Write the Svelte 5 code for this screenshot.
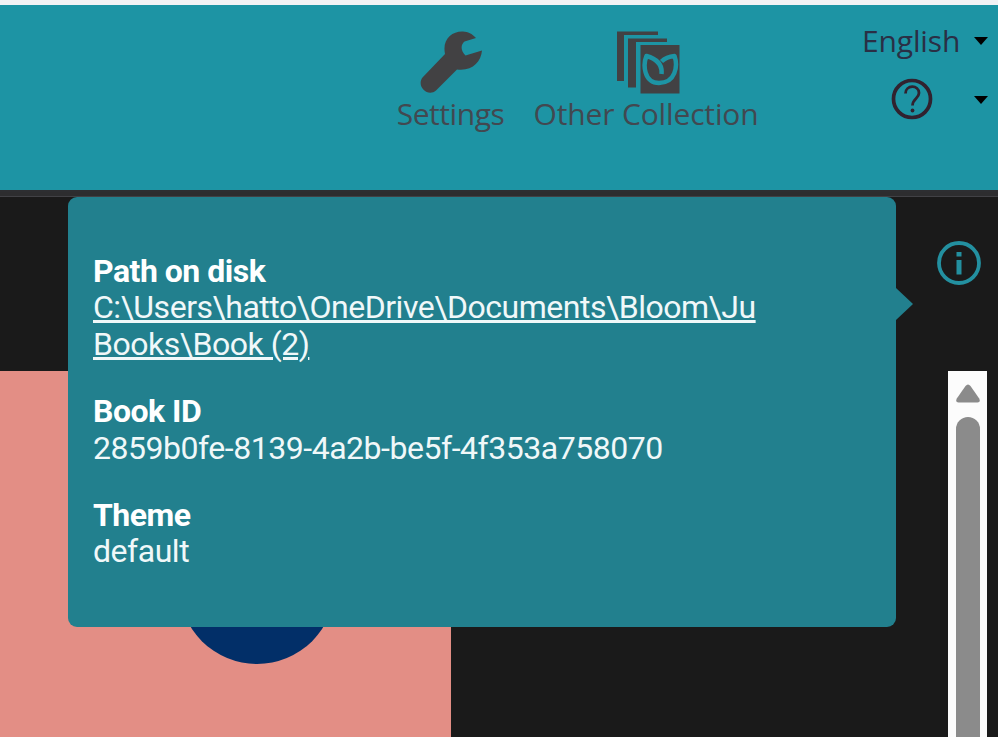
<script>
  const details = [
    { label: 'Path on disk', lines: ['C:\\Users\\hatto\\OneDrive\\Documents\\Bloom\\Ju', 'Books\\Book (2)'], link: true },
    { label: 'Book ID', lines: ['2859b0fe-8139-4a2b-be5f-4f353a758070'] },
    { label: 'Theme', lines: ['default'] }
  ];
</script>

<div class="window">
  <header>
    <nav>
      <button class="tool settings">
        <svg width="64" height="66" viewBox="0 0 64 66" fill="#424143">
          <path d="M3.500 47.500L26 24C23 9 33 1 44 1.500C49 1.800 53 3.500 57 8L45.500 11.500C41.500 14.500 41.500 21 46.500 25.500L63 20.500C62 32 53 41.500 38 39.500L17 60.500C9 67.500-3 56.500 3.500 47.500Z" />
        </svg>
        <span>Settings</span>
      </button>
      <button class="tool other">
        <svg width="64" height="66" viewBox="0 0 64 66">
          <path d="M1 1.500H42V5H8V51H1Z M12 8.500H51V12H20V57.500H12Z M24.500 15H63.500V63.500H24.500Z" fill="#424143" />
          <path d="M45.500 44C46.500 35 41 29 30.500 26C27 34 27.500 53 43 53C59.500 53 62 36 58.500 26C52.500 26.500 48.500 28.500 45.500 31.500" fill="none" stroke="#1d94a4" stroke-width="4.500" stroke-linejoin="round" />
        </svg>
        <span>Other Collection</span>
      </button>
    </nav>
    <div class="side">
      <div class="row language"><span>English</span><i class="caret"></i></div>
      <div class="row help">
        <svg width="42" height="42" viewBox="0 0 42 42" fill="none" stroke="#31222f">
          <circle cx="21" cy="21" r="18.500" stroke-width="3.700" />
          <path d="M14.500 15.500C14.500 6.500 28 6.500 28 15C28 20.500 21.500 20.500 21.500 27.500" stroke-width="2.800" />
          <circle cx="21.500" cy="32.500" r="1.900" fill="#31222f" stroke="none" />
        </svg>
        <i class="caret"></i>
      </div>
    </div>
  </header>
  <main>
    <div class="cover"><div class="dot"></div></div>
    <aside>
      <svg class="info" width="46" height="46" viewBox="0 0 46 46">
        <circle cx="23" cy="23" r="20" fill="none" stroke="#2390a0" stroke-width="3.800" />
        <path d="M20.500 12H25.500V16.500H20.500Z M20.500 20H25.500V34.500H20.500Z" fill="#2390a0" />
      </svg>
      <div class="scrollbar">
        <svg width="24" height="19" viewBox="0 0 24 19" fill="#8b8b8b"><path d="M9.500 2Q12 -1 14.500 2L23.200 14.500Q25 18.500 21.500 18.500H2.500Q-1 18.500 .8 14.500Z" /></svg>
        <div class="thumb"></div>
      </div>
    </aside>
    <section class="popup">
      {#each details as item}
        <dl>
          <dt>{item.label}</dt>
          {#each item.lines as line}
            <dd><span class:link={item.link}>{line}</span></dd>
          {/each}
        </dl>
      {/each}
    </section>
  </main>
</div>

<style>
  .window { width: 998px; height: 737px; overflow: hidden; display: flex; flex-direction: column; background: #1a1a1a; }
  header { box-sizing: border-box; flex: 0 0 192px; height: 192px; display: flex; justify-content: space-between; background: #1d94a4; border-top: 5px solid #f2f2f4; border-bottom: 2px solid #2d2e31; font: 30px/36px "Open Sans", "Noto Sans", sans-serif; letter-spacing: -0.15px; }
  nav { display: flex; margin-left: 397px; gap: 30px; padding-top: 25px; }
  .tool { width: 107px; padding: 0; border: 0; background: none; display: flex; flex-direction: column; align-items: center; font: inherit; letter-spacing: inherit; color: #424850; white-space: nowrap; }
  .tool svg { flex: none; }
  .settings { letter-spacing: -0.45px; }
  .other { width: 224px; }
  .other svg { margin-left: 3px; }
  .side { width: 136px; display: flex; flex-direction: column; padding-top: 18px; color: #2a2f45; }
  .row { display: flex; align-items: center; justify-content: space-between; box-sizing: border-box; width: 126px; }
  .help { margin-top: 19px; padding-left: 29px; }
  .caret { width: 14px; height: 8px; background: #000; clip-path: polygon(0 0, 100% 0, 50% 100%); }
  .help .caret { margin-top: 2px; }
  main { position: relative; flex: 1; display: flex; justify-content: space-between; align-items: flex-end; border-top: 4px solid #2d2d2f; box-shadow: inset 0 1px #414145; }
  .cover { width: 451px; height: 366px; background: #e38e85; overflow: hidden; }
  .dot { width: 156px; height: 156px; margin: 137px 0 0 179px; border-radius: 50%; background: #022f68; }
  aside { width: 61px; height: 497px; display: flex; flex-direction: column; justify-content: space-between; padding-right: 1px; }
  .info { flex: none; }
  .scrollbar { margin-left: 12px; width: 39px; height: 366px; background: #fcfcfc; display: flex; flex-direction: column; align-items: center; gap: 14px; padding-top: 13px; box-sizing: border-box; overflow: hidden; }
  .scrollbar svg { flex: none; }
  .thumb { width: 24px; height: 340px; flex: none; border-radius: 12px; background: #8b8b8b; }
  .popup { position: absolute; left: 67.5px; top: 1px; width: 828.5px; height: 430px; box-sizing: border-box; padding: 56px 25.5px; border-radius: 9px; background: #22808e; color: #f0f8f9; font: 32px/36.4px Roboto, sans-serif; letter-spacing: -0.47px; white-space: nowrap; }
  .popup::after { content: ''; position: absolute; left: 100%; top: 91px; width: 17px; height: 32px; background: inherit; clip-path: polygon(0 0, 100% 50%, 0 100%); }
  dl { margin: 0 0 31px; }
  dt { font-weight: 700; letter-spacing: -0.5px; color: #fff; }
  dd { margin: 0; }
  .link { text-decoration: underline; text-decoration-thickness: 2.5px; text-underline-offset: 2px; }
</style>
